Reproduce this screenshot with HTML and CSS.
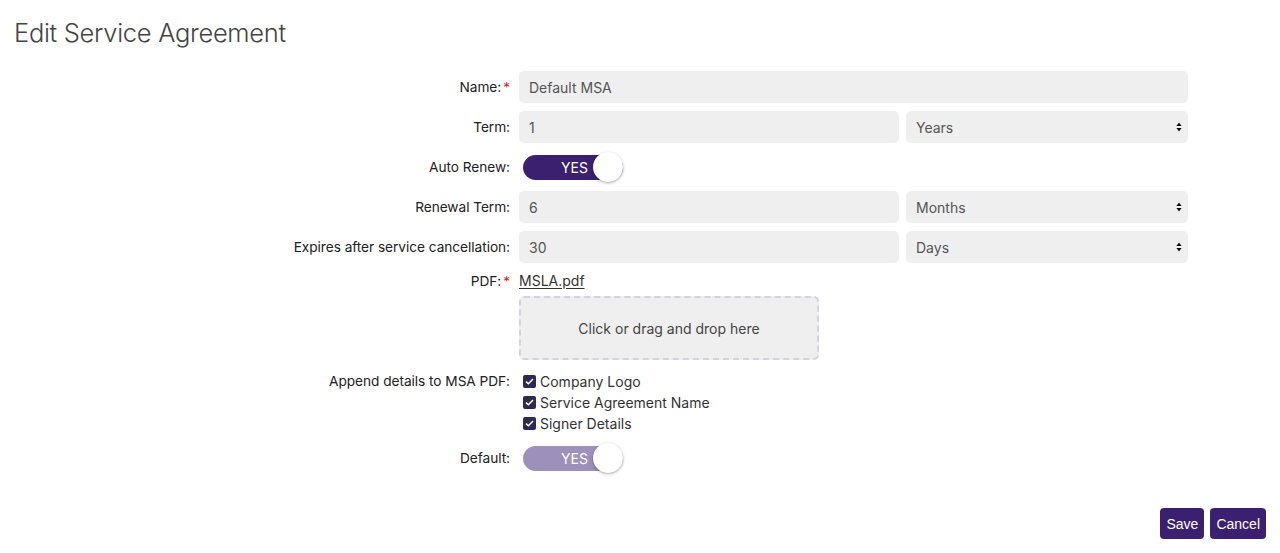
FILE: index.html
```html
<!DOCTYPE html>
<html lang="en">
<head>
<meta charset="utf-8">
<title>Edit Service Agreement</title>
<link rel="stylesheet" href="styles.css">
</head>
<body>
<h1 class="title">Edit Service Agreement</h1>
<form class="form">
  <label class="label">Name:<span class="req">*</span></label>
  <div class="field"><input class="input" type="text" value="Default MSA"></div>

  <label class="label">Term:</label>
  <div class="field split">
    <input class="input" type="text" value="1">
    <div class="select-wrap">
      <select class="select"><option>Years</option></select>
      <svg class="arrows" width="6" height="10" viewBox="0 0 6 10"><path d="M3 0.5 L5.6 4 H0.4 Z M3 9.5 L5.6 6 H0.4 Z" fill="#111"/></svg>
    </div>
  </div>

  <label class="label">Auto Renew:</label>
  <div class="field"><div class="toggle on"><span class="toggle-text">YES</span><span class="knob"></span></div></div>

  <label class="label">Renewal Term:</label>
  <div class="field split">
    <input class="input" type="text" value="6">
    <div class="select-wrap">
      <select class="select"><option>Months</option></select>
      <svg class="arrows" width="6" height="10" viewBox="0 0 6 10"><path d="M3 0.5 L5.6 4 H0.4 Z M3 9.5 L5.6 6 H0.4 Z" fill="#111"/></svg>
    </div>
  </div>

  <label class="label">Expires after service cancellation:</label>
  <div class="field split">
    <input class="input" type="text" value="30">
    <div class="select-wrap">
      <select class="select"><option>Days</option></select>
      <svg class="arrows" width="6" height="10" viewBox="0 0 6 10"><path d="M3 0.5 L5.6 4 H0.4 Z M3 9.5 L5.6 6 H0.4 Z" fill="#111"/></svg>
    </div>
  </div>

  <label class="label top">PDF:<span class="req">*</span></label>
  <div class="field col">
    <a class="file-link" href="#">MSLA.pdf</a>
    <div class="dropzone">Click or drag and drop here</div>
  </div>

  <label class="label top lh21">Append details to MSA PDF:</label>
  <div class="field col checks">
    <div class="check"><span class="box"><svg width="9" height="7" viewBox="0 0 9 7"><path d="M1 3.6 L3.4 5.8 L8 1" fill="none" stroke="#fff" stroke-width="1.5"/></svg></span>Company Logo</div>
    <div class="check"><span class="box"><svg width="9" height="7" viewBox="0 0 9 7"><path d="M1 3.6 L3.4 5.8 L8 1" fill="none" stroke="#fff" stroke-width="1.5"/></svg></span>Service Agreement Name</div>
    <div class="check"><span class="box"><svg width="9" height="7" viewBox="0 0 9 7"><path d="M1 3.6 L3.4 5.8 L8 1" fill="none" stroke="#fff" stroke-width="1.5"/></svg></span>Signer Details</div>
  </div>

  <label class="label">Default:</label>
  <div class="field"><div class="toggle light"><span class="toggle-text">YES</span><span class="knob"></span></div></div>
</form>
<div class="actions">
  <button class="btn" type="button">Save</button>
  <button class="btn" type="button">Cancel</button>
</div>
</body>
</html>
```
FILE: styles.css
```css
* { box-sizing: border-box; }
html, body { margin: 0; padding: 0; background: #fff; }
body {
  font-family: Inter, "Noto Sans", sans-serif;
  font-size: 14px;
  color: #222;
  width: 1280px;
  height: 553px;
  overflow: hidden;
}
.title {
  margin: 17px 0 0 14px;
  font-size: 25.5px;
  line-height: 32px;
  font-weight: 300;
  color: #444;
  letter-spacing: -0.3px;
}
.form {
  display: grid;
  grid-template-columns: 510px 669px;
  column-gap: 9px;
  row-gap: 8px;
  margin-top: 22px;
}
.label {
  display: flex;
  align-items: center;
  justify-content: flex-end;
  min-height: 32px;
  color: #222;
  font-size: 13.7px;
  letter-spacing: -0.05px;
  white-space: nowrap;
}
.label.top { align-items: flex-start; min-height: 20px; line-height: 20px; }
.label.lh21 { line-height: 21px; }
.req { color: #e01b1b; margin-left: 2px; }
.field { display: flex; align-items: center; }
.field.col { flex-direction: column; align-items: flex-start; }
.split { display: grid; grid-template-columns: 380px 1fr; column-gap: 7px; }
.input, .select {
  width: 100%;
  height: 32px;
  border: none;
  border-radius: 5px;
  background: #efefef;
  padding: 0 10px;
  font-family: inherit;
  font-size: 14px;
  color: #555;
  outline: none;
}
.select { appearance: none; -webkit-appearance: none; }
.select-wrap { position: relative; }
.arrows { position: absolute; right: 6px; top: 11px; }
.toggle {
  position: relative;
  width: 100px;
  height: 25px;
  margin-left: 4px;
  border-radius: 13px;
}
.toggle.on { background: #3a206f; }
.toggle.light { background: #9d90bb; }
.toggle-text {
  position: absolute;
  left: 38px;
  top: 0;
  line-height: 25px;
  color: #fff;
  font-size: 14px;
  font-weight: 400;
}
.knob {
  position: absolute;
  right: 0;
  top: -3px;
  width: 30px;
  height: 30px;
  border-radius: 50%;
  background: #fff;
  box-shadow: 0 1px 3px rgba(0,0,0,0.35);
}
.file-link {
  color: #333;
  line-height: 20px;
  text-decoration: underline;
  text-underline-offset: 2px;
}
.dropzone {
  margin-top: 5px;
  margin-bottom: 3px;
  width: 300px;
  height: 64px;
  border: 2px dashed #d4d1e2;
  border-radius: 5px;
  background: #efefef;
  display: flex;
  align-items: center;
  justify-content: center;
  color: #444;
  font-size: 14px;
}
.checks { padding-left: 4px; }
.check {
  display: flex;
  align-items: center;
  height: 21px;
  color: #333;
  font-size: 14px;
}
.box {
  width: 13px;
  height: 13px;
  border-radius: 2px;
  background: #2e2a4f;
  display: inline-flex;
  align-items: center;
  justify-content: center;
  margin-right: 4px;
}
.actions {
  display: flex;
  justify-content: flex-end;
  gap: 6px;
  margin: 34px 14px 0 0;
}
.btn {
  height: 31px;
  padding: 0 6px;
  border: none;
  border-radius: 4px;
  background: #3a206f;
  color: #fff;
  font-family: "Liberation Sans", Arial, sans-serif;
  font-size: 14px;
}
```
